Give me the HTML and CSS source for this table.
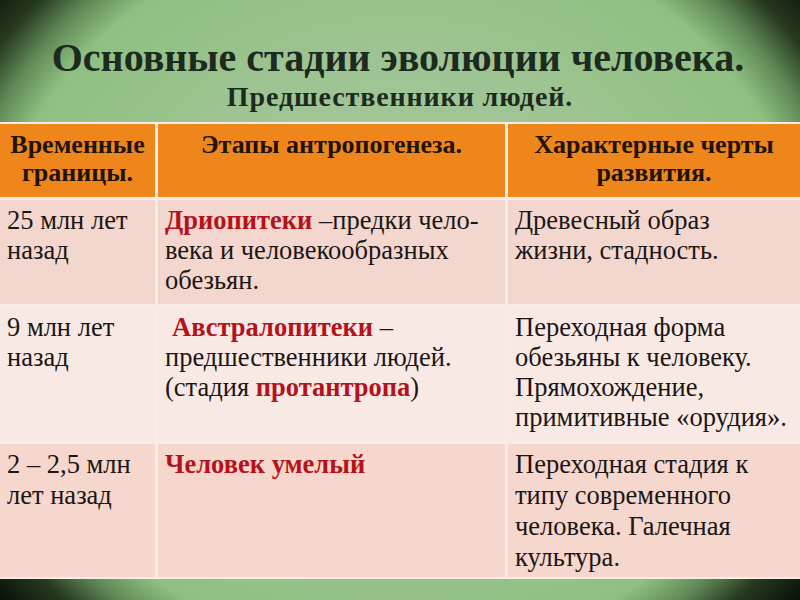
FILE: index.html
```html
<!DOCTYPE html>
<html lang="ru">
<head>
<meta charset="utf-8">
<title>Основные стадии эволюции человека</title>
<link rel="stylesheet" href="styles.css">
</head>
<body>
<div class="slide">
  <header class="head">
    <h1 class="title">Основные стадии эволюции человека.</h1>
    <h2 class="subtitle">Предшественники людей.</h2>
  </header>
  <div class="table">
    <div class="cell th">Временные<br>границы.</div>
    <div class="cell th">Этапы антропогенеза.</div>
    <div class="cell th">Характерные черты<br>развития.</div>

    <div class="cell r1">25 млн лет<br>назад</div>
    <div class="cell r1"><b class="red">Дриопитеки</b> –предки чело-<br>века и человекообразных<br>обезьян.</div>
    <div class="cell r1">Древесный образ<br>жизни, стадность.</div>

    <div class="cell r2">9 млн лет<br>назад</div>
    <div class="cell r2"><b class="red indent">Австралопитеки</b> –<br>предшественники людей.<br>(стадия <b class="red">протантропа</b>)</div>
    <div class="cell r2">Переходная форма<br>обезьяны к человеку.<br>Прямохождение,<br>примитивные «орудия».</div>

    <div class="cell r3">2 – 2,5 млн<br>лет назад</div>
    <div class="cell r3"><b class="red">Человек умелый</b></div>
    <div class="cell r3">Переходная стадия к<br>типу современного<br>человека. Галечная<br>культура.</div>
  </div>
</div>
</body>
</html>
```
FILE: styles.css
```css
html, body {
  margin: 0;
  padding: 0;
}
body {
  width: 800px;
  height: 600px;
  overflow: hidden;
  font-family: "Liberation Serif", "Times New Roman", Tinos, "DejaVu Serif", serif;
}
.slide {
  width: 800px;
  height: 600px;
  display: flex;
  flex-direction: column;
  background: radial-gradient(ellipse 440px 392px at 50% 48%,
    #a8c7a0 0%, #9fc494 55%, #8fc081 93%, #5e8755 102%, #27391f 110%, #0b130b 120%);
}
.head {
  height: 122px;
  box-sizing: border-box;
  padding-top: 36px;
  display: flex;
  flex-direction: column;
  align-items: center;
  gap: 2px;
  color: #1d2a20;
}
.title {
  margin: 0;
  font-size: 40px;
  line-height: 44px;
  font-weight: bold;
  padding-right: 4px;
}
.subtitle {
  margin: 0;
  font-size: 28px;
  line-height: 30px;
  font-weight: bold;
  letter-spacing: 0.9px;
}
.table {
  display: grid;
  grid-template-columns: 155px 347px 1fr;
  grid-template-rows: 73px 104px 134px 133px;
  gap: 3px;
  padding: 2px 0;
  background: #f8ece4;
}
.cell {
  box-sizing: border-box;
  padding: 5px 4px 0 7px;
  font-size: 26.5px;
  line-height: 30px;
  color: #1b1614;
}
.th {
  background: #ee861c;
  font-weight: bold;
  font-size: 26px;
  line-height: 28px;
  text-align: center;
  padding: 7px 2px 0;
  color: #211306;
}
.r1 { background: #f3d6cd; }
.r2 { background: #f9e9e5; }
.r3 {
  background: #f6d7cd;
  line-height: 31px;
}
.red {
  color: #b5121b;
  font-weight: bold;
}
.indent {
  margin-left: 7px;
}
```
